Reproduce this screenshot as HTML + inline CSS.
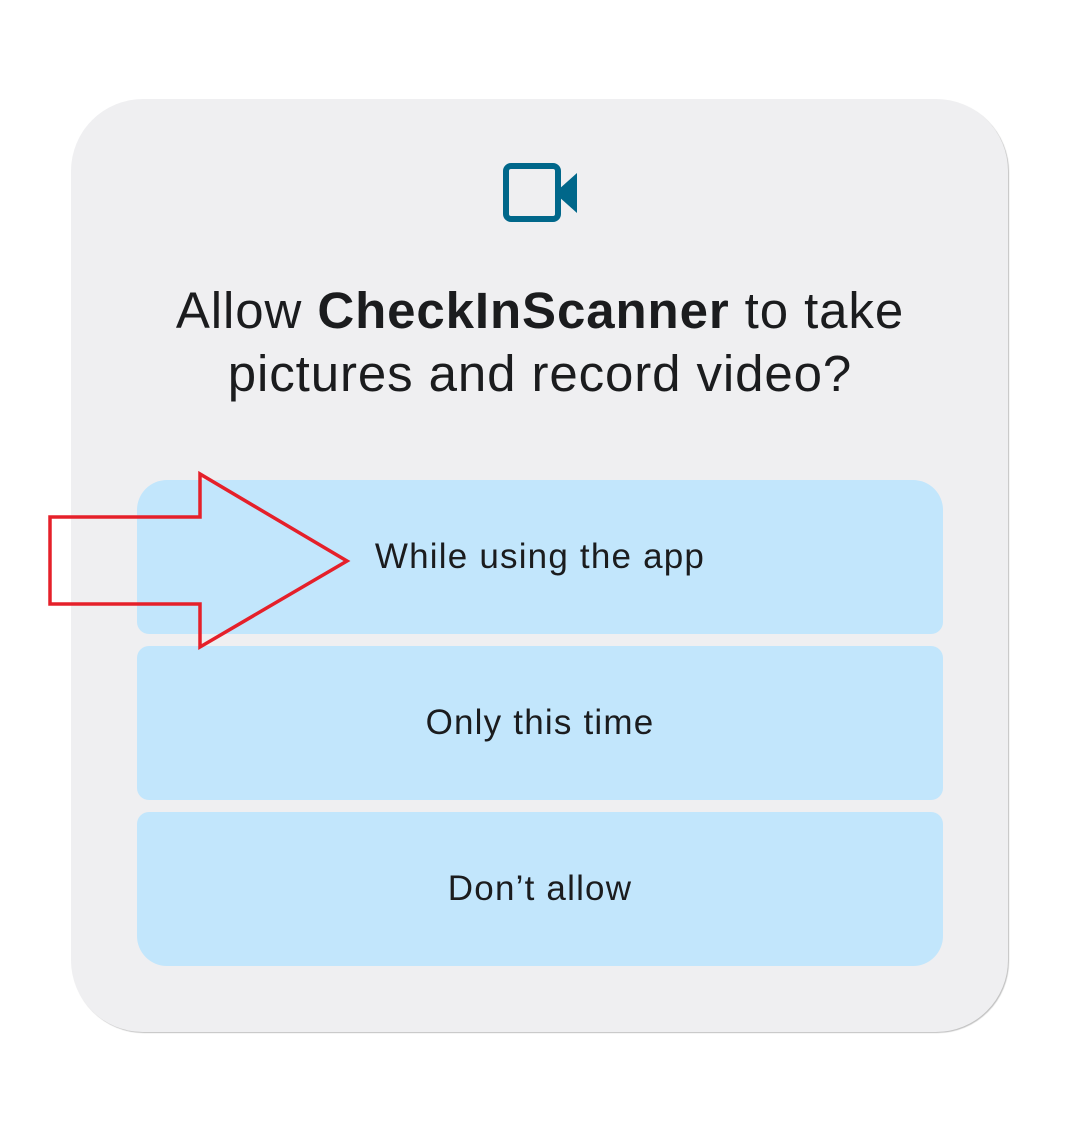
<!DOCTYPE html>
<html><head><meta charset="utf-8"><style>
html,body{margin:0;padding:0;background:#fff;width:1080px;height:1136px;overflow:hidden;font-family:"Liberation Sans",Roboto,sans-serif;}
.card{position:absolute;left:71px;top:99px;width:937px;height:933px;background:#efeff1;border-radius:72px;box-shadow:1px 1px 1px rgba(0,0,0,0.25);}
.title{position:absolute;left:40px;top:279px;width:1000px;text-align:center;font-size:51px;line-height:63px;color:#1b1c1e;letter-spacing:0.9px;}
.btn{position:absolute;left:137px;width:806px;height:154px;background:#c2e6fc;border-radius:12px;display:flex;align-items:center;justify-content:center;font-size:35px;color:#1b1c1e;letter-spacing:1.2px;}
</style></head><body>
<div class="card"></div>
<svg style="position:absolute;left:0;top:0" width="1080" height="1136">
<rect x="506" y="166" width="52" height="53" rx="5" fill="none" stroke="#00678a" stroke-width="6"/>
<polygon points="558,190 577,173 577,213 558,196" fill="#00678a"/>
</svg>
<div class="title">Allow <b>CheckInScanner</b> to take<br>pictures and record video?</div>
<div class="btn" style="top:480px;border-radius:30px 30px 12px 12px">While using the app</div>
<div class="btn" style="top:646px">Only this time</div>
<div class="btn" style="top:812px;border-radius:12px 12px 30px 30px">Don’t allow</div>
<svg style="position:absolute;left:0;top:0" width="1080" height="1136">
<polygon points="50,517 200,517 200,474 347,561 200,647 200,604 50,604" fill="none" stroke="#e5202a" stroke-width="3.5"/>
</svg>
</body></html>
